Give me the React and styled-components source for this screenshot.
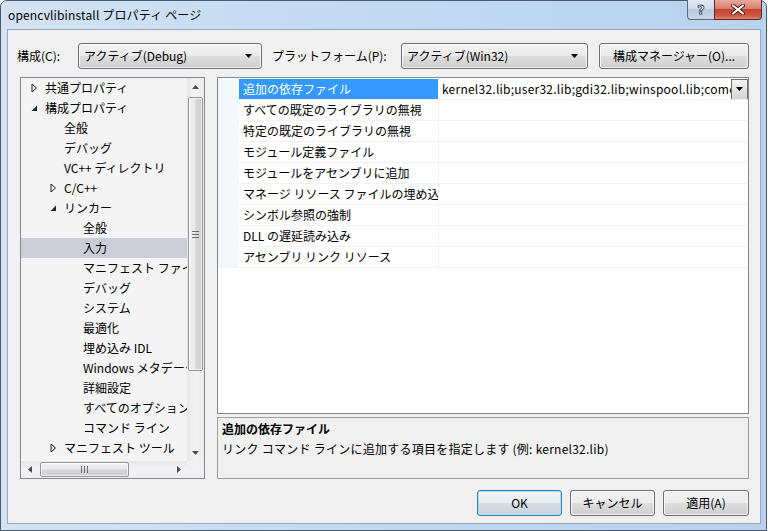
import React from 'react';
import styled, { createGlobalStyle, css } from 'styled-components';

const Global = createGlobalStyle`
  html, body { margin: 0; padding: 0; background: #ffffff; }
  body {
    font-family: "Noto Sans CJK JP", "Noto Sans", sans-serif;
    font-size: 12px;
    color: #000;
  }
  #root { width: 768px; height: 531px; overflow: hidden; }
  * { box-sizing: border-box; }
`;

const Win = styled.div`
  width: 767px;
  height: 531px;
  border: 1px solid #4b5b6e;
  border-radius: 7px 7px 0 0;
  background: linear-gradient(to right, #d3e3f4 0%, #c3daf2 45%, #b8d2ee 100%);
  display: flex;
  flex-direction: column;
  padding: 0 5px 6px 6px;
`;

const TitleBar = styled.div`
  height: 28px;
  flex: none;
  display: flex;
  align-items: flex-start;
`;

const TitleText = styled.div`
  flex: 1;
  height: 28px;
  line-height: 28px;
  padding-left: 1px;
  white-space: nowrap;
  letter-spacing: 0.15px;
  color: #000;
`;

const CapButtons = styled.div`
  display: flex;
  margin-top: -1px;
  margin-right: -1px;
`;

const CapBtn = styled.div`
  height: 20px;
  display: flex;
  align-items: center;
  justify-content: center;
  border: 1px solid #5b6a7c;
  border-top: none;
  ${(p) =>
    p.$close
      ? css`
          width: 48px;
          border-color: #5a2a22;
          border-radius: 0 0 4px 0;
          background: linear-gradient(#e9a99d 0%, #d9806f 45%, #c4412d 50%, #cf5b44 85%, #e08a72 100%);
        `
      : css`
          width: 27px;
          border-right: none;
          border-radius: 0 0 0 4px;
          background: linear-gradient(#e1eaf5 0%, #cfdcec 45%, #b9c9de 50%, #c8d7ea 100%);
        `}
`;

const HelpGlyph = styled.span`
  font-family: "DejaVu Sans", sans-serif;
  font-weight: bold;
  font-size: 13px;
  line-height: 1;
  color: #fff;
  -webkit-text-stroke: 0.8px #3d4a5a;
`;

const Client = styled.div`
  flex: 1;
  border: 1px solid #97a8ba;
  background: #f0f0f0;
  display: flex;
  flex-direction: column;
  padding: 13px 11px 6px 12px;
`;

const Toolbar = styled.div`
  height: 26px;
  display: flex;
  align-items: center;
  margin-left: -3px;
`;

const Label = styled.div`
  width: ${(p) => p.$w}px;
  margin-left: ${(p) => p.$ml || 0}px;
  white-space: nowrap;
  line-height: 16px;
`;

const btnFace = css`
  border: 1px solid #707070;
  border-radius: 3px;
  background: linear-gradient(#f2f2f2 0%, #ebebeb 48%, #dddddd 52%, #cfcfcf 100%);
  box-shadow: inset 0 0 0 1px rgba(255, 255, 255, 0.75);
`;

const Combo = styled.div`
  ${btnFace};
  width: ${(p) => p.$w}px;
  height: 26px;
  display: flex;
  align-items: center;
  padding: 0 8px 0 5px;
`;

const ComboText = styled.div`
  flex: 1;
  white-space: nowrap;
  line-height: 16px;
`;

const Btn = styled.div`
  ${btnFace};
  width: ${(p) => p.$w}px;
  height: 26px;
  margin-left: ${(p) => p.$ml || 0}px;
  display: flex;
  align-items: center;
  justify-content: center;
  white-space: nowrap;
  line-height: 16px;
  ${(p) =>
    p.$default &&
    css`
      border-color: #3c7fb1;
      box-shadow: inset 0 0 0 1px #a9dcf6;
      background: linear-gradient(#f0f4f7 0%, #e7ecef 48%, #d7dde2 52%, #cdd4da 100%);
    `}
`;

const Main = styled.div`
  margin-top: 8px;
  height: 402px;
  display: flex;
  gap: 12px;
`;

const Tree = styled.div`
  width: 185px;
  border: 1px solid #828790;
  background: #f4f4f4;
  display: grid;
  grid-template-columns: 166px 17px;
  grid-template-rows: 383px 17px;
`;

const TreeList = styled.div`
  overflow: hidden;
`;

const TreeRow = styled.div`
  height: 20px;
  display: flex;
  align-items: center;
  white-space: nowrap;
  padding-left: ${(p) => 9 + p.$level * 19}px;
  background: ${(p) => (p.$selected ? '#cbced8' : 'transparent')};
`;

const Expander = styled.span`
  width: 15px;
  flex: none;
  display: flex;
  align-items: center;
  padding-left: 1px;
`;

const RowText = styled.span`
  line-height: 16px;
`;

const VScroll = styled.div`
  display: flex;
  flex-direction: column;
  background: linear-gradient(to right, #e6e6e6, #f2f2f2 40%, #eeeeee);
`;

const HScroll = styled.div`
  display: flex;
  background: linear-gradient(#e6e6e6, #f2f2f2 40%, #eeeeee);
`;

const ScrollCorner = styled.div`
  background: #f0f0f0;
`;

const ArrowBtn = styled.div`
  width: 17px;
  height: 17px;
  flex: none;
  display: flex;
  align-items: center;
  justify-content: center;
`;

const VTrack = styled.div`
  flex: 1;
  display: flex;
  flex-direction: column;
  padding-top: 2px;
`;

const VThumb = styled.div`
  height: 274px;
  margin: 0 1px;
  border: 1px solid #969696;
  border-radius: 2px;
  background: linear-gradient(to right, #f3f3f3 0%, #e8e8e8 45%, #d6d6d6 55%, #cfcfcf 100%);
  box-shadow: inset 0 0 0 1px rgba(255, 255, 255, 0.7);
  display: flex;
  align-items: center;
  justify-content: center;
`;

const HTrack = styled.div`
  flex: 1;
  display: flex;
  padding-left: 2px;
`;

const HThumb = styled.div`
  width: 89px;
  margin: 1px 0;
  border: 1px solid #969696;
  border-radius: 2px;
  background: linear-gradient(#f3f3f3 0%, #e8e8e8 45%, #d6d6d6 55%, #cfcfcf 100%);
  box-shadow: inset 0 0 0 1px rgba(255, 255, 255, 0.7);
  display: flex;
  align-items: center;
  justify-content: center;
`;

const Right = styled.div`
  width: 532px;
  display: flex;
  flex-direction: column;
  gap: 3px;
`;

const Grid = styled.div`
  height: 337px;
  border: 1px solid #828790;
  background: #ffffff;
  padding-top: 1px;
`;

const PropRow = styled.div`
  display: grid;
  grid-template-columns: 21px 200px 1fr;
  height: 21px;
`;

const Gutter = styled.div`
  background: #f4f7fc;
`;

const NameCell = styled.div`
  border-bottom: 1px solid #eff2f6;
  border-right: 1px solid #eff2f6;
  padding-left: 4px;
  display: flex;
  align-items: center;
  overflow: hidden;
  white-space: nowrap;
  line-height: 16px;
  background: ${(p) => (p.$selected ? '#3399ff' : 'transparent')};
  color: ${(p) => (p.$selected ? '#ffffff' : '#000000')};
`;

const ValueCell = styled.div`
  border-bottom: 1px solid #eff2f6;
  display: flex;
  align-items: stretch;
  overflow: hidden;
`;

const ValueText = styled.div`
  flex: 1;
  padding-left: 3px;
  display: flex;
  align-items: center;
  overflow: hidden;
  white-space: nowrap;
  line-height: 16px;
  letter-spacing: 0.24px;
`;

const DropBtn = styled.div`
  width: 17px;
  height: 21px;
  flex: none;
  border: 1px solid #707070;
  background: linear-gradient(#f4f4f4 0%, #e4e4e4 50%, #d4d4d4 100%);
  display: flex;
  align-items: center;
  justify-content: center;
`;

const Desc = styled.div`
  flex: 1;
  border: 1px solid #a0a0a0;
  background: #f0f0f0;
  padding: 1px 4px;
`;

const DescTitle = styled.div`
  font-weight: bold;
  line-height: 20px;
`;

const DescText = styled.div`
  line-height: 20px;
  letter-spacing: 0.25px;
`;

const Footer = styled.div`
  margin-top: 11px;
  height: 27px;
  display: flex;
  justify-content: flex-end;
  align-items: flex-start;
`;

const DownTri = () => (
  <svg width="8" height="5" viewBox="0 0 8 5">
    <polygon points="0,0 7,0 3.5,4" fill="#000" />
  </svg>
);

const Collapsed = () => (
  <svg width="7" height="10" viewBox="0 0 7 10">
    <polygon points="1,1 5.5,5 1,9" fill="none" stroke="#1e1e1e" strokeWidth="1" />
  </svg>
);

const Expanded = () => (
  <svg width="7" height="7" viewBox="0 0 7 7">
    <polygon points="6,0.5 6,6 0.5,6" fill="#262626" />
  </svg>
);

const SmallArrow = ({ dir }) => {
  const pts = {
    up: '0,4 3.5,0 7,4',
    down: '0,0 7,0 3.5,4',
    left: '4,0 4,7 0,3.5',
    right: '0,0 0,7 4,3.5',
  }[dir];
  const vertical = dir === 'up' || dir === 'down';
  return (
    <svg width={vertical ? 7 : 4} height={vertical ? 4 : 7} viewBox={vertical ? '0 0 7 4' : '0 0 4 7'}>
      <polygon points={pts} fill="#4d4d4d" />
    </svg>
  );
};

const VGrip = () => (
  <svg width="7" height="7" viewBox="0 0 7 7">
    <rect x="0" y="0" width="7" height="1" fill="#6e6e6e" />
    <rect x="0" y="3" width="7" height="1" fill="#6e6e6e" />
    <rect x="0" y="6" width="7" height="1" fill="#6e6e6e" />
  </svg>
);

const HGrip = () => (
  <svg width="7" height="7" viewBox="0 0 7 7">
    <rect x="0" y="0" width="1" height="7" fill="#6e6e6e" />
    <rect x="3" y="0" width="1" height="7" fill="#6e6e6e" />
    <rect x="6" y="0" width="1" height="7" fill="#6e6e6e" />
  </svg>
);

const CloseX = () => (
  <svg width="14" height="11" viewBox="0 0 14 11">
    <path d="M2,1.5 L12,9.5 M12,1.5 L2,9.5" stroke="#4a1a14" strokeWidth="4" strokeLinecap="round" />
    <path d="M2,1.5 L12,9.5 M12,1.5 L2,9.5" stroke="#ffffff" strokeWidth="2.2" strokeLinecap="round" />
  </svg>
);

const treeItems = [
  { t: '共通プロパティ', l: 0, e: 'c' },
  { t: '構成プロパティ', l: 0, e: 'e' },
  { t: '全般', l: 1 },
  { t: 'デバッグ', l: 1 },
  { t: 'VC++ ディレクトリ', l: 1 },
  { t: 'C/C++', l: 1, e: 'c' },
  { t: 'リンカー', l: 1, e: 'e' },
  { t: '全般', l: 2 },
  { t: '入力', l: 2, s: true },
  { t: 'マニフェスト ファイル', l: 2 },
  { t: 'デバッグ', l: 2 },
  { t: 'システム', l: 2 },
  { t: '最適化', l: 2 },
  { t: '埋め込み IDL', l: 2 },
  { t: 'Windows メタデータ', l: 2 },
  { t: '詳細設定', l: 2 },
  { t: 'すべてのオプション', l: 2 },
  { t: 'コマンド ライン', l: 2 },
  { t: 'マニフェスト ツール', l: 1, e: 'c' },
];

const props = [
  '追加の依存ファイル',
  'すべての既定のライブラリの無視',
  '特定の既定のライブラリの無視',
  'モジュール定義ファイル',
  'モジュールをアセンブリに追加',
  'マネージ リソース ファイルの埋め込み',
  'シンボル参照の強制',
  'DLL の遅延読み込み',
  'アセンブリ リンク リソース',
];

const depValue =
  'kernel32.lib;user32.lib;gdi32.lib;winspool.lib;comdlg32.lib;advapi32.lib;shell32.lib;ole32.lib;oleaut32.lib;uuid.lib;odbc32.lib;odbccp32.lib;%(AdditionalDependencies)';

export default function App() {
  return (
    <>
      <Global />
      <Win>
        <TitleBar>
          <TitleText>opencvlibinstall プロパティ ページ</TitleText>
          <CapButtons>
            <CapBtn>
              <HelpGlyph>?</HelpGlyph>
            </CapBtn>
            <CapBtn $close>
              <CloseX />
            </CapBtn>
          </CapButtons>
        </TitleBar>
        <Client>
          <Toolbar>
            <Label $w={61}>構成(C):</Label>
            <Combo $w={184}>
              <ComboText>アクティブ(Debug)</ComboText>
              <DownTri />
            </Combo>
            <Label $w={129} $ml={10}>プラットフォーム(P):</Label>
            <Combo $w={187}>
              <ComboText>アクティブ(Win32)</ComboText>
              <DownTri />
            </Combo>
            <Btn $w={150} $ml={11}>構成マネージャー(O)...</Btn>
          </Toolbar>
          <Main>
            <Tree>
              <TreeList>
                {treeItems.map((it, i) => (
                  <TreeRow key={i} $level={it.l} $selected={it.s}>
                    <Expander>
                      {it.e === 'c' && <Collapsed />}
                      {it.e === 'e' && <Expanded />}
                    </Expander>
                    <RowText>{it.t}</RowText>
                  </TreeRow>
                ))}
              </TreeList>
              <VScroll>
                <ArrowBtn>
                  <SmallArrow dir="up" />
                </ArrowBtn>
                <VTrack>
                  <VThumb>
                    <VGrip />
                  </VThumb>
                </VTrack>
                <ArrowBtn>
                  <SmallArrow dir="down" />
                </ArrowBtn>
              </VScroll>
              <HScroll>
                <ArrowBtn>
                  <SmallArrow dir="left" />
                </ArrowBtn>
                <HTrack>
                  <HThumb>
                    <HGrip />
                  </HThumb>
                </HTrack>
                <ArrowBtn>
                  <SmallArrow dir="right" />
                </ArrowBtn>
              </HScroll>
              <ScrollCorner />
            </Tree>
            <Right>
              <Grid>
                {props.map((p, i) => (
                  <PropRow key={i}>
                    <Gutter />
                    <NameCell $selected={i === 0}>{p}</NameCell>
                    <ValueCell>
                      <ValueText>{i === 0 ? depValue : ''}</ValueText>
                      {i === 0 && (
                        <DropBtn>
                          <DownTri />
                        </DropBtn>
                      )}
                    </ValueCell>
                  </PropRow>
                ))}
              </Grid>
              <Desc>
                <DescTitle>追加の依存ファイル</DescTitle>
                <DescText>リンク コマンド ラインに追加する項目を指定します (例: kernel32.lib)</DescText>
              </Desc>
            </Right>
          </Main>
          <Footer>
            <Btn $w={85} $default>OK</Btn>
            <Btn $w={85} $ml={8}>キャンセル</Btn>
            <Btn $w={86} $ml={8}>適用(A)</Btn>
          </Footer>
        </Client>
      </Win>
    </>
  );
}
